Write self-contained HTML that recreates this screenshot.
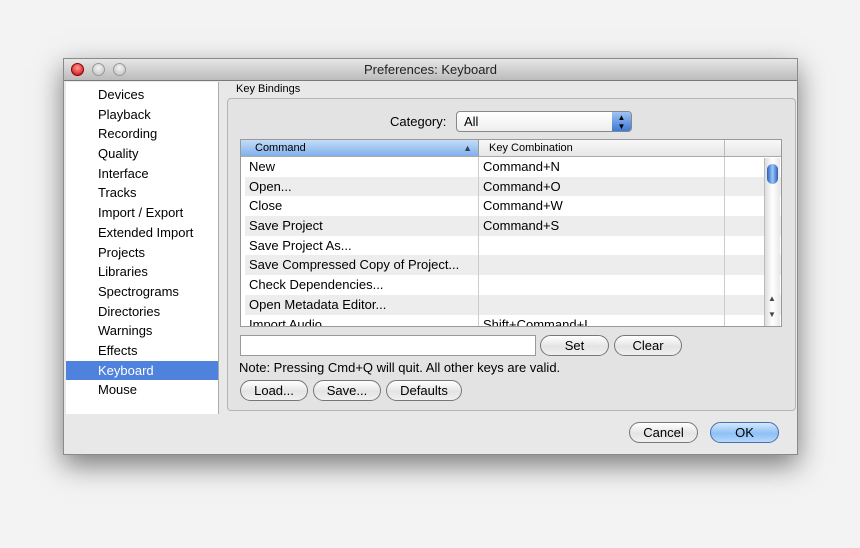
<!DOCTYPE html>
<html><head><style>
*{margin:0;padding:0;box-sizing:border-box}
body{width:860px;height:548px;background:#f3f3f3;font-family:"Liberation Sans",sans-serif;font-size:13px;color:#000;position:relative;overflow:hidden}
.abs{position:absolute}
.win{left:63px;top:58px;width:735px;height:397px;background:#e8e8e8;border:1px solid #8a8a8a;box-shadow:0 10px 26px rgba(0,0,0,.5)}
.title{left:0;top:0;width:733px;height:22px;background:linear-gradient(#e6e6e6,#bcbcbc);border-bottom:1px solid #7a7a7a;text-align:center;line-height:22px;font-size:13px;color:#222}
.dot{width:13px;height:13px;border-radius:50%;top:4px;border:1px solid #999;background:radial-gradient(circle at 50% 35%,#f4f4f4,#bdbdbd)}
.side{left:2px;top:23px;width:153px;height:332px;background:#fff;border-right:1px solid #aaa}
.side div{height:19.7px;line-height:19.7px;padding-left:32px;font-size:13px}
.sel{background:#4f82dd;color:#fff}
.btn{border:1px solid #777;border-radius:11px;background:linear-gradient(#fff,#e4e4e4 55%,#f0f0f0);text-align:center;height:21px;line-height:19px;font-size:13px}
.row{height:19.7px;line-height:19.7px;display:flex}
.row span{display:block;padding-left:4px}
.c1{width:234px;border-right:1px solid #ccc}
.c2{width:246px;border-right:1px solid #ccc}
.alt{background:#ededed}
</style></head><body>
<div class="abs win">
 <div class="abs title">Preferences: Keyboard</div>
 <div class="abs dot" style="left:7px;background:radial-gradient(circle at 50% 35%,#f99,#c00);border-color:#800"></div>
 <div class="abs dot" style="left:28px"></div>
 <div class="abs dot" style="left:49px"></div>
 <div class="abs side" style="padding-top:3px">
  <div>Devices</div><div>Playback</div><div>Recording</div><div>Quality</div><div>Interface</div><div>Tracks</div><div>Import / Export</div><div>Extended Import</div><div>Projects</div><div>Libraries</div><div>Spectrograms</div><div>Directories</div><div>Warnings</div><div>Effects</div><div class="sel">Keyboard</div><div>Mouse</div>
 </div>
 <div class="abs" style="left:172px;top:24px;font-size:11px">Key Bindings</div>
 <div class="abs" style="left:163px;top:39px;width:569px;height:313px;border:1px solid #b5b5b5;border-radius:4px;background:#e3e3e3"></div>
 <div class="abs" style="left:326px;top:55px">Category:</div>
 <div class="abs" style="left:392px;top:52px;width:176px;height:21px;border:1px solid #888;border-radius:4px;background:linear-gradient(#fff,#eee);padding-left:7px;line-height:19px">All
  <div class="abs" style="right:0;top:0;width:19px;height:19px;background:linear-gradient(#9fc3f3,#3d79d6);border-radius:0 3px 3px 0;color:#000;font-size:8px;line-height:9px;text-align:center;padding-top:1px">▲<br>▼</div></div>
 <div class="abs" style="left:176px;top:80px;width:542px;height:188px;border:1px solid #999;background:#fff;overflow:hidden">
  <div style="display:flex;height:17px;line-height:17px;font-size:11px;border-bottom:1px solid #aaa;background:linear-gradient(#f8f8f8,#e6e6e6)">
   <div style="width:238px;padding-left:14px;background:linear-gradient(#c4dcf8,#7fb0ec);border-right:1px solid #999;position:relative">Command<span style="position:absolute;right:6px;color:#345;font-size:9px">▲</span></div>
   <div style="width:246px;padding-left:10px;border-right:1px solid #bbb">Key Combination</div>
  </div>
  <div style="padding-left:4px">
  <div class="row"><span class="c1">New</span><span class="c2">Command+N</span></div>
  <div class="row alt"><span class="c1">Open...</span><span class="c2">Command+O</span></div>
  <div class="row"><span class="c1">Close</span><span class="c2">Command+W</span></div>
  <div class="row alt"><span class="c1">Save Project</span><span class="c2">Command+S</span></div>
  <div class="row"><span class="c1">Save Project As...</span><span class="c2"></span></div>
  <div class="row alt"><span class="c1">Save Compressed Copy of Project...</span><span class="c2"></span></div>
  <div class="row"><span class="c1">Check Dependencies...</span><span class="c2"></span></div>
  <div class="row alt"><span class="c1">Open Metadata Editor...</span><span class="c2"></span></div>
  <div class="row"><span class="c1">Import Audio...</span><span class="c2">Shift+Command+I</span></div>
  </div>
  <div class="abs" style="left:523px;top:18px;width:16px;height:170px;background:linear-gradient(90deg,#ddd,#fff 50%,#e8e8e8);border-left:1px solid #bbb">
   <div class="abs" style="left:2px;top:6px;width:11px;height:20px;border-radius:6px;background:linear-gradient(90deg,#2a5fb8,#9cc7fa 50%,#2a5fb8)"></div>
   <div class="abs" style="left:3px;top:136px;font-size:8px;color:#444">▲</div>
   <div class="abs" style="left:3px;top:152px;font-size:8px;color:#444">▼</div>
  </div>
 </div>
 <div class="abs" style="left:176px;top:276px;width:296px;height:21px;border:1px solid #999;background:#fff"></div>
 <div class="abs btn" style="left:476px;top:276px;width:69px">Set</div>
 <div class="abs btn" style="left:550px;top:276px;width:68px">Clear</div>
 <div class="abs" style="left:175px;top:301px">Note: Pressing Cmd+Q will quit. All other keys are valid.</div>
 <div class="abs btn" style="left:176px;top:321px;width:68px">Load...</div>
 <div class="abs btn" style="left:249px;top:321px;width:68px">Save...</div>
 <div class="abs btn" style="left:322px;top:321px;width:76px">Defaults</div>
 <div class="abs btn" style="left:565px;top:363px;width:69px">Cancel</div>
 <div class="abs btn" style="left:646px;top:363px;width:69px;background:linear-gradient(#d5e8fd,#8ec0f6 55%,#b6d8fb);border-color:#4a6ea8">OK</div>
</div>
</body></html>
